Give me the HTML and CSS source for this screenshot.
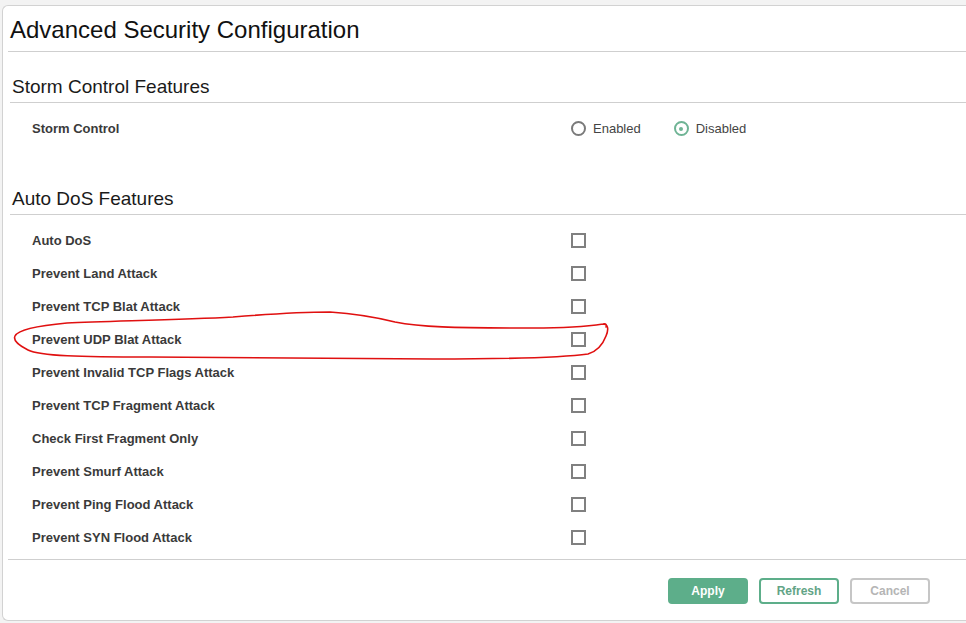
FILE: index.html
```html
<!DOCTYPE html>
<html>
<head>
<meta charset="utf-8">
<link rel="stylesheet" href="styles.css">
</head>
<body>
<div class="page">
  <div class="card">
    <div class="title">Advanced Security Configuration</div>

    <div class="section-head">Storm Control Features</div>
    <div class="rows">
      <div class="row">
        <div class="label">Storm Control</div>
        <div class="control radios">
          <label class="radio"><span class="circle"></span>Enabled</label>
          <label class="radio"><span class="circle on"></span>Disabled</label>
        </div>
      </div>
    </div>

    <div class="section-head second">Auto DoS Features</div>
    <div class="rows">
      <div class="row"><div class="label">Auto DoS</div><div class="control"><span class="check"></span></div></div>
      <div class="row"><div class="label">Prevent Land Attack</div><div class="control"><span class="check"></span></div></div>
      <div class="row"><div class="label">Prevent TCP Blat Attack</div><div class="control"><span class="check"></span></div></div>
      <div class="row"><div class="label">Prevent UDP Blat Attack</div><div class="control"><span class="check"></span></div></div>
      <div class="row"><div class="label">Prevent Invalid TCP Flags Attack</div><div class="control"><span class="check"></span></div></div>
      <div class="row"><div class="label">Prevent TCP Fragment Attack</div><div class="control"><span class="check"></span></div></div>
      <div class="row"><div class="label">Check First Fragment Only</div><div class="control"><span class="check"></span></div></div>
      <div class="row"><div class="label">Prevent Smurf Attack</div><div class="control"><span class="check"></span></div></div>
      <div class="row"><div class="label">Prevent Ping Flood Attack</div><div class="control"><span class="check"></span></div></div>
      <div class="row"><div class="label">Prevent SYN Flood Attack</div><div class="control"><span class="check"></span></div></div>
    </div>

    <div class="footer">
      <button class="btn apply">Apply</button>
      <button class="btn refresh">Refresh</button>
      <button class="btn cancel">Cancel</button>
    </div>
  </div>
  <svg class="annotation" width="966" height="623" viewBox="0 0 966 623">
    <path d="M603 324 C608 324 609 329 606 336 C603 344 598 351 588 354 C560 358 500 359 433 359 C350 358 250 358 150 357 C80 357 40 356 28 350 C18 345 13 340 15 336 C18 330 35 326 67 323 C110 321 180 320 233 317 C270 314 300 312 330 312 C360 314 375 317 395 322 C420 327 450 328 533 328 C570 328 590 326 603 324 C606 323 607 325 606 327" fill="none" stroke="#e01010" stroke-width="1.6" stroke-linecap="round"/>
  </svg>
</div>
</body>
</html>
```

FILE: styles.css
```css
html, body {
  margin: 0;
  padding: 0;
  background: #f3f3f3;
}
body {
  font-family: "Liberation Sans", Arial, sans-serif;
  color: #333;
}
.page {
  position: relative;
  width: 966px;
  height: 623px;
  overflow: hidden;
  padding-top: 5px;
  padding-left: 2px;
  box-sizing: border-box;
}
.card {
  background: #fff;
  border: 1px solid #d2d2d2;
  border-right: none;
  border-radius: 6px 0 0 6px;
  height: 616px;
  box-sizing: border-box;
  padding-left: 5px;
}
.title {
  font-size: 24px;
  color: #111;
  height: 46px;
  line-height: 48px;
  box-sizing: border-box;
  padding-left: 2px;
  border-bottom: 1px solid #cfcfcf;
}
.section-head {
  margin-left: 2px;
  padding-left: 2px;
  height: 51px;
  box-sizing: border-box;
  border-bottom: 1px solid #cfcfcf;
  font-size: 19px;
  color: #1a1a1a;
  padding-top: 24px;
  line-height: 22px;
}
.section-head.second {
  margin-top: 19px;
}
.rows {
  margin-left: 2px;
  padding-top: 9px;
}
.row {
  display: flex;
  align-items: center;
  height: 33px;
}
.label {
  width: 561px;
  padding-left: 22px;
  box-sizing: border-box;
  flex: none;
  font-size: 13px;
  font-weight: bold;
  color: #3a3a3a;
}
.control {
  display: flex;
  align-items: center;
}
.radios {
  gap: 33px;
}
.radio {
  display: flex;
  align-items: center;
  gap: 7px;
  font-size: 13px;
  color: #444;
}
.circle {
  width: 15px;
  height: 15px;
  box-sizing: border-box;
  border: 2px solid #7a7a7a;
  border-radius: 50%;
  position: relative;
}
.circle.on {
  border-color: #6fb495;
}
.circle.on::after {
  content: "";
  position: absolute;
  left: 3.5px;
  top: 3.5px;
  width: 4px;
  height: 4px;
  border-radius: 50%;
  background: #6fb495;
}
.check {
  width: 15px;
  height: 15px;
  box-sizing: border-box;
  border: 2px solid #808080;
  background: #fff;
}
.footer {
  margin-top: 5px;
  border-top: 1px solid #cfcfcf;
  display: flex;
  gap: 11px;
  padding-top: 18px;
  padding-left: 660px;
}
.btn {
  width: 80px;
  height: 26px;
  box-sizing: border-box;
  border-radius: 4px;
  font-family: "Liberation Sans", Arial, sans-serif;
  font-size: 12px;
  font-weight: bold;
  background: #fff;
  padding: 0;
}
.apply {
  background: #5dae8a;
  border: 2px solid #5dae8a;
  color: #fff;
}
.refresh {
  border: 2px solid #5dae8a;
  color: #62a486;
}
.cancel {
  border: 2px solid #c6c6c6;
  color: #b5b5b5;
}
.annotation {
  position: absolute;
  left: 0;
  top: 0;
  pointer-events: none;
}
```
